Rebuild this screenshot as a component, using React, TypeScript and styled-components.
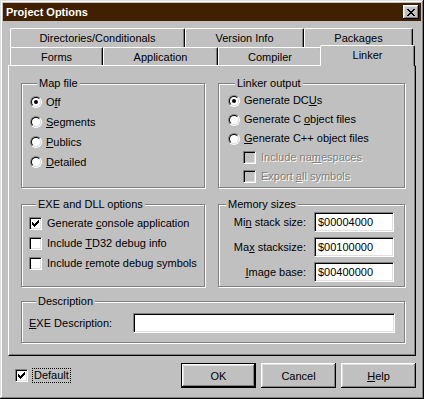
import * as React from "react";
import styled, { createGlobalStyle, css } from "styled-components";

const GlobalStyle = createGlobalStyle`
    html, body {
        margin: 0;
        padding: 0;
        background: #c0c0c0;
    }
    body {
        font-family: "Liberation Sans", Arial, sans-serif;
        font-size: 11px;
        color: #000;
    }
    * {
        box-sizing: border-box;
    }
`

const Window = styled.div`
    width: 424px;
    height: 399px;
    padding: 3px;
    background: #c0c0c0;
    display: flex;
    flex-direction: column;
    box-shadow: inset -1px -1px #000, inset 1px 1px #dfdfdf, inset -2px -2px #808080, inset 2px 2px #fff;
`

const TitleBar = styled.div`
    height: 18px;
    flex: none;
    display: flex;
    align-items: center;
    justify-content: space-between;
    padding: 0 2px 0 3px;
    background: #402000;
    color: #fff;
    font-weight: bold;
    font-size: 11px;
    line-height: 18px;
`

const CloseButton = styled.div`
    width: 16px;
    height: 14px;
    display: flex;
    align-items: center;
    justify-content: center;
    background: #c0c0c0;
    box-shadow: inset -1px -1px #000, inset 1px 1px #fff, inset -2px -2px #808080, inset 2px 2px #dfdfdf;
`

const Body = styled.div`
    display: flex;
    flex-direction: column;
    padding: 0 5px;
`

const TabStrip = styled.div`
    margin-top: 7px;
    display: flex;
    flex-direction: column;
`

const TabRow = styled.div<{ $h: number }>`
    display: flex;
    align-items: flex-end;
    height: ${({ $h }) => $h}px;
    padding-left: 2px;
`

const Tab = styled.div<{ $w: number; $active?: boolean }>`
    flex: none;
    width: ${({ $w }) => $w}px;
    height: 100%;
    display: flex;
    align-items: center;
    justify-content: center;
    background: #c0c0c0;
    border: 1px solid;
    border-color: #fff #000 transparent #fff;
    border-bottom: none;
    border-radius: 2px 2px 0 0;
    box-shadow: inset -1px 0 #808080;
    white-space: nowrap;
    ${({ $active }) => $active && css`
        position: relative;
        z-index: 2;
        height: 21px;
        margin: 0 -2px -1px;
        padding-bottom: 3px;
    `}
`

const Panel = styled.div`
    width: 408px;
    height: 291px;
    padding: 17px 0 0 12px;
    border: 1px solid;
    border-color: #fff #000 #000 #fff;
    box-shadow: inset -1px -1px #808080;
`

const GroupRow = styled.div<{ $top?: number }>`
    display: grid;
    grid-template-columns: 184px 187px;
    column-gap: 13px;
    margin-top: ${({ $top }) => $top ?? 0}px;
`

const Group = styled.div<{ $h: number; $pad: string; $span?: boolean }>`
    height: ${({ $h }) => $h}px;
    border: 1px solid #808080;
    box-shadow: inset 1px 1px #fff, 1px 1px #fff;
    padding: ${({ $pad }) => $pad};
    ${({ $span }) => $span && css`grid-column: 1 / 3;`}
`

const Legend = styled.div<{ $after?: number }>`
    width: fit-content;
    margin: -7px 0 ${({ $after }) => $after ?? 0}px 7px;
    padding: 0 2px;
    line-height: 13px;
    background: #c0c0c0;
`

const OptionRow = styled.div<{ $h: number; $indent?: number; $disabled?: boolean }>`
    display: flex;
    align-items: center;
    height: ${({ $h }) => $h}px;
    padding-left: ${({ $indent }) => $indent ?? 0}px;
    line-height: 13px;
    white-space: nowrap;
    ${({ $disabled }) => $disabled && css`
        color: #808080;
        text-shadow: 1px 1px #fff;
    `}
`

const Caption = styled.span`
    white-space: pre;
`

const RadioOuter = styled.div`
    flex: none;
    width: 12px;
    height: 12px;
    margin-right: 4px;
    border-radius: 50%;
    border: 1px solid;
    border-color: #808080 #fff #fff #808080;
`

const RadioInner = styled.div`
    width: 10px;
    height: 10px;
    border-radius: 50%;
    border: 1px solid;
    border-color: #000 #dfdfdf #dfdfdf #000;
    background: #fff;
    display: flex;
    align-items: center;
    justify-content: center;
`

const RadioDot = styled.div`
    width: 4px;
    height: 4px;
    border-radius: 50%;
    background: #000;
`

const CheckBox = styled.div<{ $disabled?: boolean }>`
    flex: none;
    width: 13px;
    height: 13px;
    margin-right: 5px;
    border: 1px solid;
    border-color: #808080 #fff #fff #808080;
    box-shadow: inset 1px 1px #000, inset -1px -1px #dfdfdf;
    background: ${({ $disabled }) => ($disabled ? "#c0c0c0" : "#fff")};
    display: flex;
    align-items: center;
    justify-content: center;
`

const Key = styled.span`
    text-decoration: underline;
    text-underline-offset: 1px;
`

const MemGrid = styled.div`
    display: grid;
    grid-template-columns: 1fr 80px;
    column-gap: 8px;
    row-gap: 5px;
    align-items: center;
    padding: 1px 10px 0 0;
`

const FieldLabel = styled.div<{ $w?: number }>`
    text-align: right;
    white-space: pre;
    line-height: 13px;
    ${({ $w }) => $w && css`
        flex: none;
        width: ${$w}px;
        text-align: left;
    `}
`

const TextBox = styled.input`
    width: 100%;
    height: 20px;
    margin: 0;
    padding: 0 3px;
    font-family: "Liberation Sans", Arial, sans-serif;
    font-size: 11px;
    color: #000;
    background: #fff;
    border: 1px solid;
    border-color: #808080 #fff #fff #808080;
    box-shadow: inset 1px 1px #000, inset -1px -1px #dfdfdf;
    outline: none;
`

const DescRow = styled.div`
    display: flex;
    align-items: center;
    padding: 5px 9px 0 0;
`

const Footer = styled.div`
    display: flex;
    align-items: center;
    height: 25px;
    margin-top: 7px;
    padding-left: 7px;
`

const FocusLabel = styled.div`
    margin-left: -1px;
    padding: 0 1px;
    line-height: 13px;
    border: 1px dotted #000;
`

const ButtonBar = styled.div`
    margin-left: auto;
    display: flex;
    gap: 5px;
`

const Button = styled.div<{ $default?: boolean }>`
    width: 75px;
    height: 25px;
    display: flex;
    align-items: center;
    justify-content: center;
    background: #c0c0c0;
    box-shadow: inset -1px -1px #000, inset 1px 1px #fff, inset -2px -2px #808080, inset 2px 2px #dfdfdf;
    ${({ $default }) => $default && css`
        border: 1px solid #000;
    `}
`

const CheckMark = () => (
    <svg width="7" height="7" viewBox="0 0 7 7" shapeRendering="crispEdges">
        {[2, 3, 4, 3, 2, 1, 0].map((t, i) => (
            <rect key={i} x={i} y={t} width="1" height="3" fill="#000" />
        ))}
    </svg>
)

const CloseGlyph = () => {
    // classic 8x7 "x" from the caption button
    const rows = [[0, 1, 6, 7], [1, 2, 5, 6], [2, 3, 4, 5], [3, 4], [2, 3, 4, 5], [1, 2, 5, 6], [0, 1, 6, 7]];
    return (
        <svg width="8" height="7" viewBox="0 0 8 7" shapeRendering="crispEdges">
            {rows.map((cols, y) => cols.map((x) => <rect key={`${x}-${y}`} x={x} y={y} width="1" height="1" fill="#000" />))}
        </svg>
    )
}

const Radio = ({ checked }: { checked?: boolean }) => (
    <RadioOuter>
        <RadioInner>{checked && <RadioDot />}</RadioInner>
    </RadioOuter>
)

const Check = ({ checked, disabled }: { checked?: boolean; disabled?: boolean }) => (
    <CheckBox $disabled={disabled}>{checked && <CheckMark />}</CheckBox>
)

const topTabs = [
    { label: "Directories/Conditionals", w: 175 },
    { label: "Version Info", w: 119 },
    { label: "Packages", w: 109 },
]
const frontTabs = [
    { label: "Forms", w: 93 },
    { label: "Application", w: 115 },
    { label: "Compiler", w: 104 },
    { label: "Linker", w: 91, active: true },
]

export default function App() {
    return (
        <>
            <GlobalStyle />
            <Window>
                <TitleBar>
                    <span>Project Options</span>
                    <CloseButton><CloseGlyph /></CloseButton>
                </TitleBar>
                <Body>
                    <TabStrip>
                        <TabRow $h={19}>
                            {topTabs.map((t) => <Tab key={t.label} $w={t.w}>{t.label}</Tab>)}
                        </TabRow>
                        <TabRow $h={18}>
                            {frontTabs.map((t) => (
                                <Tab key={t.label} $w={t.active ? t.w + 4 : t.w} $active={t.active}>{t.label}</Tab>
                            ))}
                        </TabRow>
                    </TabStrip>
                    <Panel>
                        <GroupRow>
                            <Group $h={105} $pad="0 0 0 8px">
                                <Legend $after={2}>Map file</Legend>
                                <OptionRow $h={20}><Radio checked /><Caption>O<Key>f</Key>f</Caption></OptionRow>
                                <OptionRow $h={20}><Radio /><Caption><Key>S</Key>egments</Caption></OptionRow>
                                <OptionRow $h={20}><Radio /><Caption><Key>P</Key>ublics</Caption></OptionRow>
                                <OptionRow $h={20}><Radio /><Caption><Key>D</Key>etailed</Caption></OptionRow>
                            </Group>
                            <Group $h={105} $pad="0 0 0 9px">
                                <Legend $after={1}>Linker output</Legend>
                                <OptionRow $h={19}><Radio checked /><Caption>Generate DC<Key>U</Key>s</Caption></OptionRow>
                                <OptionRow $h={19}><Radio /><Caption>Generate C <Key>o</Key>bject files</Caption></OptionRow>
                                <OptionRow $h={19}><Radio /><Caption><Key>G</Key>enerate C++ object files</Caption></OptionRow>
                                <OptionRow $h={19} $indent={15} $disabled><Check disabled /><Caption>Include na<Key>m</Key>espaces</Caption></OptionRow>
                                <OptionRow $h={19} $indent={15} $disabled><Check disabled /><Caption>Export <Key>a</Key>ll symbols</Caption></OptionRow>
                            </Group>
                        </GroupRow>
                        <GroupRow $top={16}>
                            <Group $h={83} $pad="0 0 0 7px">
                                <Legend $after={2}>EXE and DLL options</Legend>
                                <OptionRow $h={20}><Check checked /><Caption>Generate <Key>c</Key>onsole application</Caption></OptionRow>
                                <OptionRow $h={20}><Check /><Caption>Include <Key>T</Key>D32 debug info</Caption></OptionRow>
                                <OptionRow $h={20}><Check /><Caption>Include <Key>r</Key>emote debug symbols</Caption></OptionRow>
                            </Group>
                            <Group $h={83} $pad="0">
                                <Legend>Memory sizes</Legend>
                                <MemGrid>
                                    <FieldLabel>Mi<Key>n</Key> stack size:</FieldLabel>
                                    <TextBox readOnly value="$00004000" />
                                    <FieldLabel>Ma<Key>x</Key> stacksize:</FieldLabel>
                                    <TextBox readOnly value="$00100000" />
                                    <FieldLabel><Key>I</Key>mage base:</FieldLabel>
                                    <TextBox readOnly value="$00400000" />
                                </MemGrid>
                            </Group>
                        </GroupRow>
                        <GroupRow $top={14}>
                            <Group $h={42} $pad="0 0 0 7px" $span>
                                <Legend>Description</Legend>
                                <DescRow>
                                    <FieldLabel $w={104}><Key>E</Key>XE Description:</FieldLabel>
                                    <TextBox readOnly value="" />
                                </DescRow>
                            </Group>
                        </GroupRow>
                    </Panel>
                    <Footer>
                        <Check checked />
                        <FocusLabel>Default</FocusLabel>
                        <ButtonBar>
                            <Button $default>OK</Button>
                            <Button>Cancel</Button>
                            <Button><Key>H</Key>elp</Button>
                        </ButtonBar>
                    </Footer>
                </Body>
            </Window>
        </>
    );
}
